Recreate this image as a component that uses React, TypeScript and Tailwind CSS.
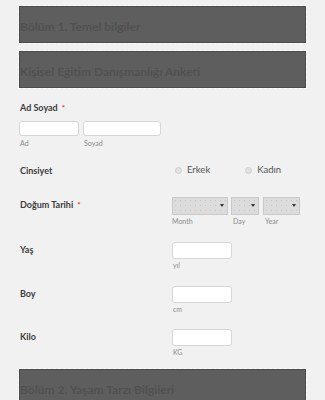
import React from 'react';

const font = { fontFamily: 'Lato, "Open Sans", sans-serif' };

const SectionBar: React.FC<{ title: string; className?: string }> = ({ title, className = '' }) => (
  <div className={`border border-dashed border-[#fbfbfb] ${className}`}>
    <div className="h-[37px] bg-[#5e5e5e] border border-[#4c4c4c] flex items-center pt-[5px]">
      <span className="text-[12px] font-bold text-[#515151] leading-none">{title}</span>
    </div>
  </div>
);

const TextBox: React.FC<{ className?: string }> = ({ className = '' }) => (
  <div className={`bg-white border border-[#d6d6d6] rounded-[3px] ${className}`} />
);

const SelectBox: React.FC<{ width: string }> = ({ width }) => (
  <div
    className={`${width} h-[18px] relative bg-[#dcdcdc] border border-[#c9c9c9] bg-[radial-gradient(circle,#c6c6c6_0.6px,transparent_0.8px)] bg-[length:5px_5px]`}
  >
    <span className="absolute right-[3px] top-[6px] w-0 h-0 border-l-[2px] border-r-[2px] border-t-[3px] border-l-transparent border-r-transparent border-t-[#333]" />
  </div>
);

const Radio: React.FC<{ label: string }> = ({ label }) => (
  <div className="flex items-center gap-[5px]">
    <span className="w-[7px] h-[7px] rounded-full border border-[#cfcfcf] bg-[#e2e2e2]" />
    <span className="text-[9.5px] text-[#555] leading-none">{label}</span>
  </div>
);

const Label: React.FC<{ text: string; required?: boolean; className?: string }> = ({ text, required, className = '' }) => (
  <div className={`text-[9px] font-bold text-[#3d3d3d] leading-[12px] ${className}`}>
    {text}
    {required && <span className="text-[#e4352b] text-[8px] font-bold ml-[4px] align-top">*</span>}
  </div>
);

const Sub: React.FC<{ text: string; className?: string }> = ({ text, className = '' }) => (
  <div className={`text-[7px] text-[#8a8a8a] leading-[10px] ${className}`}>{text}</div>
);

const NumberRow: React.FC<{ label: string; unit: string; top: string }> = ({ label, unit, top }) => (
  <div className={`flex ${top}`}>
    <div className="w-[154px] pl-[2px]">
      <Label text={label} className="mt-[2px]" />
    </div>
    <div>
      <TextBox className="w-[60px] h-[17px]" />
      <Sub text={unit} className="mt-[1px] pl-[1px]" />
    </div>
  </div>
);

export default function App() {
  return (
    <div className="w-full h-[400px] overflow-hidden bg-[#f1f1f1] px-[18px] pt-[5px]" style={font}>
      <SectionBar title="Bölüm 1. Temel bilgiler" />
      <SectionBar title="Kişisel Eğitim Danışmanlığı Anketi" className="mt-[6px]" />

      <div className="mt-[13px] pl-[2px]">
        <Label text="Ad Soyad" required />
        <div className="flex gap-[4px] mt-[7px] -ml-[1px]">
          <div>
            <TextBox className="w-[60px] h-[15px]" />
            <Sub text="Ad" className="mt-[2px] pl-[1px]" />
          </div>
          <div>
            <TextBox className="w-[78px] h-[15px]" />
            <Sub text="Soyad" className="mt-[2px] pl-[1px]" />
          </div>
        </div>
      </div>

      <div className="flex items-center h-[14px] mt-[15px]">
        <div className="w-[157px] pl-[2px] pt-[2px]">
          <Label text="Cinsiyet" />
        </div>
        <div className="flex gap-[35px]">
          <Radio label="Erkek" />
          <Radio label="Kadın" />
        </div>
      </div>

      <div className="flex mt-[20px]">
        <div className="w-[154px] pl-[2px]">
          <Label text="Doğum Tarihi" required className="mt-[2px]" />
        </div>
        <div className="flex gap-[3px]">
          <div>
            <SelectBox width="w-[56px]" />
            <Sub text="Month" className="mt-[1px]" />
          </div>
          <div>
            <SelectBox width="w-[28px]" />
            <Sub text="Day" className="mt-[1px] pl-[2px]" />
          </div>
          <div className="ml-[1px]">
            <SelectBox width="w-[37px]" />
            <Sub text="Year" className="mt-[1px] pl-[2px]" />
          </div>
        </div>
      </div>

      <NumberRow label="Yaş" unit="yıl" top="mt-[16px]" />
      <NumberRow label="Boy" unit="cm" top="mt-[16px]" />
      <NumberRow label="Kilo" unit="KG" top="mt-[15px]" />

      <SectionBar title="Bölüm 2. Yaşam Tarzı Bilgileri" className="mt-[11px]" />
    </div>
  );
}
